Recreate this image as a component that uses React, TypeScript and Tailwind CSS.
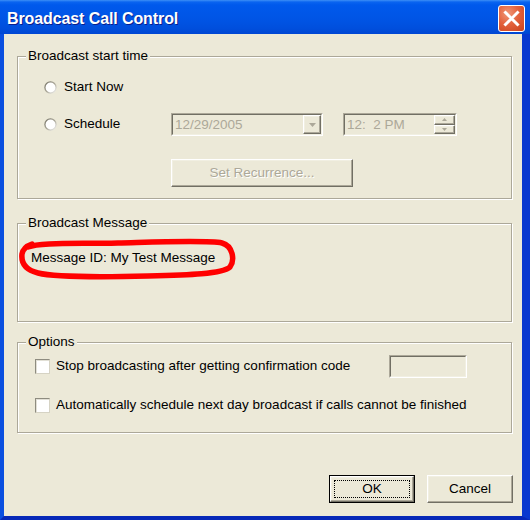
import React from "react";

const raised =
  "border border-t-white border-l-white border-r-[#716F64] border-b-[#716F64] shadow-[inset_-1px_-1px_0_#ACA899,inset_1px_1px_0_#F1EFE2] bg-[#ECE9D8]";

function Radio() {
  return (
    <svg width="13" height="13" viewBox="0 0 13 13" className="shrink-0">
      <defs>
        <linearGradient id="rg" x1="0" y1="0" x2="1" y2="1">
          <stop offset="0" stopColor="#6E6C60" />
          <stop offset="0.5" stopColor="#A8A596" />
          <stop offset="1" stopColor="#FFFFFF" />
        </linearGradient>
      </defs>
      <circle cx="6.5" cy="6.5" r="6.2" fill="url(#rg)" />
      <circle cx="6.5" cy="6.5" r="4.9" fill="#FFFFFF" />
    </svg>
  );
}

function Check() {
  return (
    <div className="w-[15px] h-[15px] shrink-0 border border-t-[#8E8C80] border-l-[#8E8C80] border-r-[#D6D3C4] border-b-[#D6D3C4] bg-white shadow-[inset_1px_1px_0_#E2E0D6]" />
  );
}

function Sunken({ className, children }: { className?: string; children?: React.ReactNode }) {
  return (
    <div className={"border border-t-[#ACA899] border-l-[#ACA899] border-r-white border-b-white " + (className ?? "")}>
      <div className="h-full flex border border-t-[#716F64] border-l-[#716F64] border-r-[#F1EFE2] border-b-[#F1EFE2] bg-[#ECE9D8]">
        {children}
      </div>
    </div>
  );
}

function Group({
  label,
  className,
  children,
}: {
  label: string;
  className?: string;
  children?: React.ReactNode;
}) {
  return (
    <div
      className={
        "relative border border-[#ACA899] shadow-[inset_1px_1px_0_#fff,1px_1px_0_#fff] " + (className ?? "")
      }
    >
      <span className="absolute left-[8px] top-[-9px] px-[2px] bg-[#ECE9D8] leading-[16px] text-black">
        {label}
      </span>
      {children}
    </div>
  );
}

export default function App() {
  return (
    <div className="w-[530px] h-[520px] flex flex-col font-['Liberation_Sans',Arial,sans-serif] text-[13.5px] text-black overflow-hidden">
      {/* Title bar */}
      <div className="h-[34px] shrink-0 flex justify-between pl-[7px] pr-[5px] bg-[linear-gradient(to_bottom,#3D8FF6_0px,#0A64F0_2px,#0059EC_5px,#0055E6_18px,#004FDD_28px,#0046D3_34px)]">
        <span className="mt-[9px] h-[20px] leading-[20px] text-white font-bold text-[16px] tracking-[-0.1px] [text-shadow:1px_1px_0_#0A1E8C]">
          Broadcast Call Control
        </span>
        <div className="mt-[5px] w-[27px] h-[27px] rounded-[3px] border border-white bg-[radial-gradient(circle_at_35%_30%,#F09878_0%,#E3623D_45%,#C9421C_100%)] flex items-center justify-center">
          <svg width="17" height="17" viewBox="0 0 17 17">
            <path d="M2.5 2.5 L14.5 14.5 M14.5 2.5 L2.5 14.5" stroke="#FFFFFF" strokeWidth="3" strokeLinecap="square" />
          </svg>
        </div>
      </div>

      {/* Body */}
      <div className="flex-1 flex flex-col bg-[#ECE9D8] border-l-4 border-l-[#0A4FE0] border-r-8 border-r-[#0838CF] border-b-4 border-b-[#0628B8] pl-[13px] pr-[10px] pt-[22px]">
        {/* Group 1 */}
        <Group label="Broadcast start time" className="h-[143px] pl-[26px] pt-[19px]">
          <div className="h-[22px] flex items-center">
            <Radio />
            <span className="ml-[7px]">Start Now</span>
          </div>
          <div className="mt-[15px] h-[23px] flex items-center">
            <div className="w-[127px] flex items-center">
              <Radio />
              <span className="ml-[7px]">Schedule</span>
            </div>
            <Sunken className="w-[152px] h-[23px]">
              <span className="flex-1 pl-[2px] leading-[19px] text-[#ACA899]">12/29/2005</span>
              <div className={"w-[18px] h-full flex items-center justify-center " + raised}>
                <svg width="7" height="4" viewBox="0 0 7 4">
                  <path d="M0 0 H7 L3.5 4 Z" fill="#ACA899" />
                </svg>
              </div>
            </Sunken>
            <Sunken className="ml-[20px] w-[114px] h-[23px]">
              <span className="flex-1 pl-[2px] leading-[19px] text-[#ACA899]">12:{"\u00a0\u00a0"}2 PM</span>
              <div className="w-[21px] h-full flex flex-col">
                <div className={"flex-1 flex items-center justify-center " + raised}>
                  <svg width="5" height="3" viewBox="0 0 5 3">
                    <path d="M0 3 H5 L2.5 0 Z" fill="#ACA899" />
                  </svg>
                </div>
                <div className={"flex-1 flex items-center justify-center " + raised}>
                  <svg width="5" height="3" viewBox="0 0 5 3">
                    <path d="M0 0 H5 L2.5 3 Z" fill="#ACA899" />
                  </svg>
                </div>
              </div>
            </Sunken>
          </div>
          <div className="mt-[23px] ml-[127px]">
            <div className={"w-[182px] h-[28px] flex items-center justify-center text-[#ACA899] [text-shadow:1px_1px_0_#fff] " + raised}>
              Set Recurrence...
            </div>
          </div>
        </Group>

        {/* Group 2 */}
        <Group label="Broadcast Message" className="mt-[24px] h-[99px] pl-[13px] pt-[26px]">
          <div className="leading-[16px]">Message ID: My Test Message</div>
          <svg className="absolute left-0 top-0 pointer-events-none" width="240" height="70" viewBox="0 0 240 70">
            <path
              d="M10 23 C 22 18, 60 20, 100 19 S 190 16, 204 19 C 215 22, 217 36, 212 43 C 205 50, 170 51, 130 52 S 40 54, 20 49 C 8 46, 3 39, 4 30 C 5 25, 8 22, 14 20"
              fill="none"
              stroke="#FF0000"
              strokeWidth="5.5"
              strokeLinecap="round"
              strokeLinejoin="round"
            />
          </svg>
        </Group>

        {/* Group 3 */}
        <Group label="Options" className="mt-[20px] h-[91px] pl-[17px] pt-[12px]">
          <div className="h-[23px] flex items-center">
            <Check />
            <span className="ml-[6px]">Stop broadcasting after getting confirmation code</span>
            <Sunken className="ml-auto mr-[44px] w-[78px] h-[23px]" />
          </div>
          <div className="mt-[20px] h-[15px] flex items-center">
            <Check />
            <span className="ml-[6px]">Automatically schedule next day broadcast if calls cannot be finished</span>
          </div>
        </Group>

        {/* Buttons */}
        <div className="mt-[42px] flex justify-end gap-[12px] mr-[-1px]">
          <div className="w-[86px] h-[28px] border border-black">
            <div className={"relative h-full flex items-center justify-center " + raised}>
              <div className="absolute inset-[3px] border border-dotted border-black" />
              OK
            </div>
          </div>
          <div className={"w-[86px] h-[28px] flex items-center justify-center " + raised}>Cancel</div>
        </div>
      </div>
    </div>
  );
}
